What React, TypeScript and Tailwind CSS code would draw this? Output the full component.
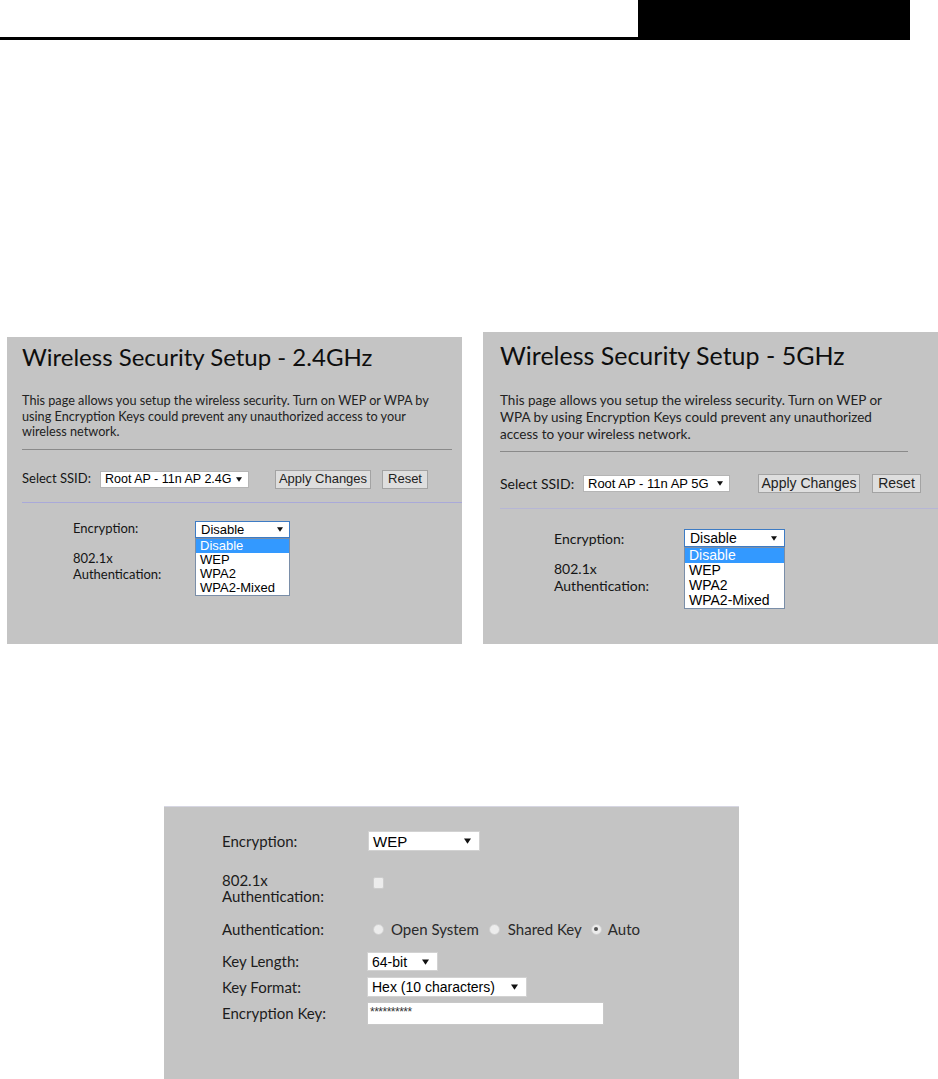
import React from "react";

const Tri = ({ w, h }: { w: number; h: number }) => (
  <svg width={w} height={h} viewBox="0 0 8 6" className="shrink-0">
    <path d="M0 0H8L4 6Z" fill="#111" />
  </svg>
);

const lato = "font-['Lato','Open_Sans',sans-serif]";
const arial = "font-['Liberation_Sans','Arial',sans-serif]";

function LeftPanel() {
  return (
    <div className={`mt-[5px] h-[307px] w-[455px] bg-[#c4c4c4] pl-[15px] text-[#151515] ${lato}`}>
      <div className="pt-[6px] text-[24px] leading-[28px] text-[#0e0e0e]">Wireless Security Setup - 2.4GHz</div>
      <p className="mt-[22px] whitespace-nowrap text-[12.7px] leading-[15.5px] text-[#222]">
        This page allows you setup the wireless security. Turn on WEP or WPA by
        <br />
        using Encryption Keys could prevent any unauthorized access to your
        <br />
        wireless network.
      </p>
      <div className="mt-[9px] h-px w-[430px] bg-[#8a8a8a]" />
      <div className="mt-[20px] flex h-[19px] items-center">
        <span className="w-[78px] text-[13px]">Select SSID:</span>
        <div className={`flex h-[17px] w-[149px] items-center justify-between whitespace-nowrap border border-[#b5b5b5] bg-white pl-[4px] pr-[6px] text-[12.5px] leading-none text-black ${arial}`}>
          <span>Root AP - 11n AP 2.4G</span>
          <Tri w={6} h={5} />
        </div>
        <div className={`ml-[26px] flex h-[19px] w-[96px] items-center justify-center border border-[#a3a3a3] bg-[#dedede] text-[13px] text-[#222] ${arial}`}>
          Apply Changes
        </div>
        <div className={`ml-[11px] flex h-[19px] w-[46px] items-center justify-center border border-[#a3a3a3] bg-[#dedede] text-[13px] text-[#222] ${arial}`}>
          Reset
        </div>
      </div>
      <div className="mt-[13px] h-px bg-[#a9a9d9]" />
      <div className="mt-[18px] pl-[51px]">
        <div className="flex h-[17px] items-center">
          <span className="w-[122px] text-[13px]">Encryption:</span>
          <div className="relative">
            <div className={`flex h-[17px] w-[95px] items-center justify-between border border-[#3d7bc4] bg-white pl-[5px] pr-[6px] text-[13px] leading-none text-black ${arial}`}>
              <span>Disable</span>
              <Tri w={6} h={5} />
            </div>
            <div className={`absolute left-0 top-full w-[95px] border border-[#7a8ea8] bg-white text-[13px] leading-[14px] text-black ${arial}`}>
              <div className="h-[14px] bg-[#3399ff] pl-[4px] text-white">Disable</div>
              <div className="h-[14px] pl-[4px]">WEP</div>
              <div className="h-[14px] pl-[4px]">WPA2</div>
              <div className="h-[14px] pl-[4px]">WPA2-Mixed</div>
            </div>
          </div>
        </div>
        <div className="mt-[12px] text-[13px] leading-[16px]">
          802.1x
          <br />
          Authentication:
        </div>
      </div>
    </div>
  );
}

function RightPanel() {
  return (
    <div className={`h-[312px] w-[455px] bg-[#c4c4c4] pl-[17px] text-[#151515] ${lato}`}>
      <div className="pt-[8px] text-[25px] leading-[30px] text-[#0e0e0e]">Wireless Security Setup - 5GHz</div>
      <p className="mt-[22px] whitespace-nowrap text-[13.5px] leading-[17px] text-[#222]">
        This page allows you setup the wireless security. Turn on WEP or
        <br />
        WPA by using Encryption Keys could prevent any unauthorized
        <br />
        access to your wireless network.
      </p>
      <div className="mt-[8px] h-px w-[408px] bg-[#8a8a8a]" />
      <div className="mt-[22px] flex h-[19px] items-center">
        <span className="w-[83px] text-[14px]">Select SSID:</span>
        <div className={`flex h-[17px] w-[147px] items-center justify-between whitespace-nowrap border border-[#b5b5b5] bg-white pl-[4px] pr-[6px] text-[13px] leading-none text-black ${arial}`}>
          <span>Root AP - 11n AP 5G</span>
          <Tri w={6} h={5} />
        </div>
        <div className={`ml-[28px] flex h-[19px] w-[102px] items-center justify-center border border-[#a3a3a3] bg-[#dedede] text-[14px] text-[#222] ${arial}`}>
          Apply Changes
        </div>
        <div className={`ml-[12px] flex h-[19px] w-[49px] items-center justify-center border border-[#a3a3a3] bg-[#dedede] text-[14px] text-[#222] ${arial}`}>
          Reset
        </div>
      </div>
      <div className="mt-[15px] h-px bg-[#b6b6d6]" />
      <div className="mt-[20px] pl-[54px]">
        <div className="flex h-[18px] items-center">
          <span className="w-[130px] text-[14px]">Encryption:</span>
          <div className="relative">
            <div className={`flex h-[18px] w-[101px] items-center justify-between border border-[#3d7bc4] bg-white pl-[5px] pr-[7px] text-[14px] leading-none text-black ${arial}`}>
              <span>Disable</span>
              <Tri w={6} h={5} />
            </div>
            <div className={`absolute left-0 top-full w-[101px] border border-[#7a8ea8] bg-white text-[14px] leading-[15px] text-black ${arial}`}>
              <div className="h-[15px] bg-[#3399ff] pl-[4px] text-white">Disable</div>
              <div className="h-[15px] pl-[4px]">WEP</div>
              <div className="h-[15px] pl-[4px]">WPA2</div>
              <div className="h-[15px] pl-[4px]">WPA2-Mixed</div>
            </div>
          </div>
        </div>
        <div className="mt-[13px] text-[14px] leading-[17px]">
          802.1x
          <br />
          Authentication:
        </div>
      </div>
    </div>
  );
}

const Radio = ({ on }: { on?: boolean }) => (
  <span className="flex h-[11px] w-[11px] items-center justify-center rounded-full border border-[#cfcfcf] bg-[#ececec]">
    {on && <span className="h-[4px] w-[4px] rounded-full bg-[#555]" />}
  </span>
);

function BottomPanel() {
  return (
    <div className={`ml-[164px] mt-[162px] h-[273px] w-[575px] border-t border-[#d6d6e2] bg-[#c4c4c4] pl-[58px] text-[15px] text-[#1c1c1c] ${lato}`}>
      <div className="mt-[24px] flex h-[20px] items-center">
        <span className="w-[146px]">Encryption:</span>
        <div className={`flex h-[20px] w-[112px] items-center justify-between border border-[#d2d2d2] bg-white pl-[4px] pr-[8px] text-[15px] leading-none text-black ${arial}`}>
          <span>WEP</span>
          <Tri w={7} h={6} />
        </div>
      </div>
      <div className="mt-[21px] flex">
        <div className="w-[146px] leading-[16px]">
          802.1x
          <br />
          Authentication:
        </div>
        <span className="ml-[5px] mt-[5px] h-[12px] w-[11px] rounded-[2px] border border-[#cdcdcd] bg-[#ececec]" />
      </div>
      <div className="mt-[17px] flex h-[16px] items-center leading-[16px]">
        <span className="w-[151px]">Authentication:</span>
        <Radio />
        <span className="ml-[7px] text-[#2a2a2a]">Open System</span>
        <span className="ml-[10px]"><Radio /></span>
        <span className="ml-[8px] text-[#2a2a2a]">Shared Key</span>
        <span className="ml-[9px]"><Radio on /></span>
        <span className="ml-[6px] text-[#2a2a2a]">Auto</span>
      </div>
      <div className="mt-[15px] flex h-[19px] items-center">
        <span className="w-[145px]">Key Length:</span>
        <div className={`flex h-[19px] w-[71px] items-center justify-between border border-[#d2d2d2] bg-white pl-[4px] pr-[8px] text-[14px] leading-none text-black ${arial}`}>
          <span>64-bit</span>
          <Tri w={7} h={6} />
        </div>
      </div>
      <div className="mt-[6px] flex h-[20px] items-center">
        <span className="w-[145px]">Key Format:</span>
        <div className={`flex h-[20px] w-[160px] items-center justify-between border border-[#d2d2d2] bg-white pl-[4px] pr-[8px] text-[14px] leading-none text-black ${arial}`}>
          <span>Hex (10 characters)</span>
          <Tri w={7} h={6} />
        </div>
      </div>
      <div className="mt-[5px] flex h-[23px] items-center">
        <span className="w-[145px]">Encryption Key:</span>
        <div className={`h-[23px] w-[237px] border border-[#c8c8c8] bg-white pl-[2px] pt-[3px] text-[12px] leading-[12px] tracking-[-0.5px] text-[#333] ${arial}`}>
          **********
        </div>
      </div>
    </div>
  );
}

export default function App() {
  return (
    <div className="h-[1079px] w-[938px] overflow-hidden bg-white">
      <div className="flex h-[40px]">
        <div className="w-[638px] border-b-[3px] border-black" />
        <div className="w-[272px] bg-black" />
      </div>
      <div className="mt-[292px] flex items-start gap-[21px] pl-[7px]">
        <LeftPanel />
        <RightPanel />
      </div>
      <BottomPanel />
    </div>
  );
}
